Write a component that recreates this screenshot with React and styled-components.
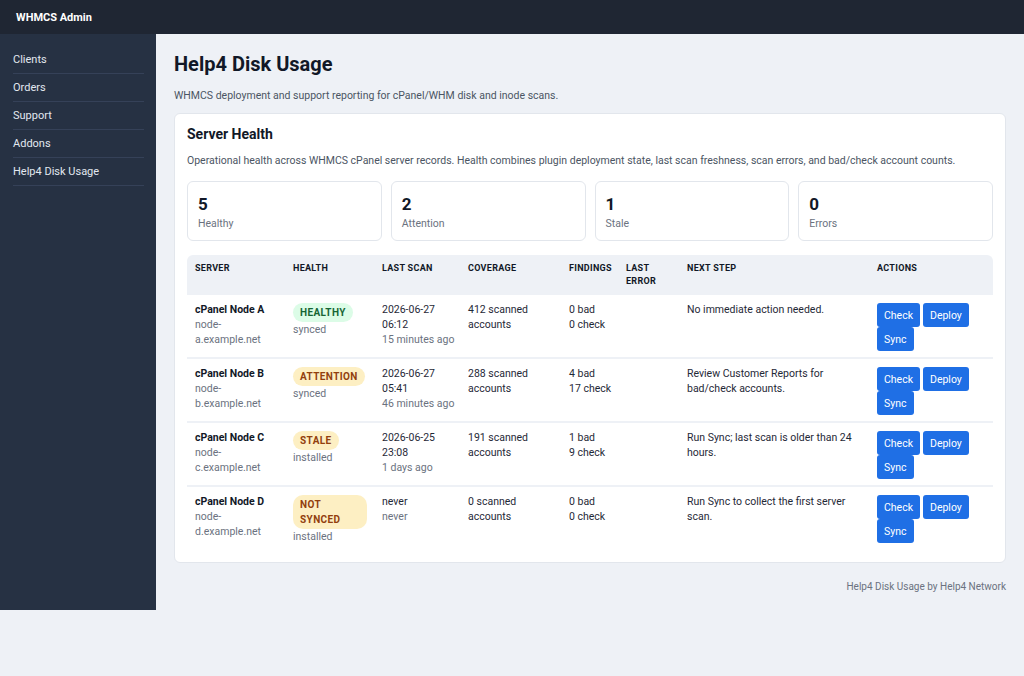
import React from 'react';
import styled, { createGlobalStyle } from 'styled-components';

const GlobalStyle = createGlobalStyle`
  html, body {
    margin: 0;
    padding: 0;
    background: #eef1f6;
    font-family: Roboto, "Noto Sans", "Liberation Sans", sans-serif;
    color: #111827;
  }
  * { box-sizing: border-box; }
`;

const TopBar = styled.header`
  height: 34px;
  background: #1f2633;
  color: #ffffff;
  display: flex;
  align-items: center;
  padding: 0 16px;
  font-size: 11px;
  font-weight: 700;
`;

const Layout = styled.div`
  display: flex;
  align-items: stretch;
`;

const Sidebar = styled.nav`
  width: 156px;
  flex-shrink: 0;
  background: #263143;
  padding: 12px 12px 0 13px;
`;

const NavItem = styled.div`
  height: 28px;
  display: flex;
  align-items: center;
  font-size: 11px;
  color: #e2e8f0;
  border-bottom: 1px solid #354158;
`;

const Main = styled.main`
  flex: 1;
  padding: 18px 18px 16px 18px;
`;

const PageTitle = styled.h1`
  margin: 0;
  font-size: 20px;
  line-height: 24px;
  font-weight: 700;
  color: #111827;
`;

const Subtitle = styled.p`
  margin: 12px 0 10px;
  font-size: 10.5px;
  line-height: 15px;
  color: #4b5563;
`;

const Card = styled.section`
  background: #ffffff;
  border: 1px solid #e2e6ec;
  border-radius: 6px;
  padding: 12px 12px 12px;
`;

const CardTitle = styled.h2`
  margin: 0;
  font-size: 14px;
  line-height: 17px;
  font-weight: 700;
  color: #111827;
`;

const CardText = styled.p`
  margin: 10px 0 13px;
  font-size: 10.5px;
  line-height: 15px;
  color: #4b5563;
`;

const StatsGrid = styled.div`
  display: grid;
  grid-template-columns: repeat(4, 1fr);
  gap: 9px;
  margin-bottom: 14px;
`;

const StatCard = styled.div`
  border: 1px solid #e2e6ec;
  border-radius: 6px;
  padding: 11px 10px 9px;
  height: 60px;
`;

const StatValue = styled.div`
  font-size: 17px;
  line-height: 22px;
  font-weight: 700;
  color: #111827;
`;

const StatLabel = styled.div`
  font-size: 10.5px;
  line-height: 18px;
  color: #6b7280;
`;

const Table = styled.table`
  width: 100%;
  border-collapse: separate;
  border-spacing: 0;
  table-layout: fixed;
  font-size: 10.5px;
  line-height: 15px;
`;

const Th = styled.th`
  background: #eef1f6;
  text-align: left;
  vertical-align: top;
  padding: 7px 4px 0 8px;
  height: 40px;
  font-size: 9px;
  line-height: 13px;
  font-weight: 700;
  letter-spacing: 0.3px;
  text-transform: uppercase;
  color: #111827;

  &:first-child { border-top-left-radius: 6px; }
  &:last-child { border-top-right-radius: 6px; }
`;

const Td = styled.td`
  vertical-align: top;
  padding: 7px 4px 6px 8px;
  color: #1f2937;
  border-bottom: ${({ $last }) => ($last ? 'none' : '2px solid #eef1f6')};
`;

const ServerName = styled.div`
  font-weight: 700;
  color: #111827;
`;

const Muted = styled.div`
  color: #6b7280;
  white-space: ${({ $nowrap }) => ($nowrap ? 'nowrap' : 'normal')};
`;

const badgeColors = {
  healthy: { bg: '#dcfce7', fg: '#166534' },
  attention: { bg: '#fdefc3', fg: '#92400e' },
  stale: { bg: '#fdefc3', fg: '#92400e' },
  notsynced: { bg: '#fdefc3', fg: '#92400e' },
};

const Badge = styled.span`
  display: inline-block;
  max-width: 74px;
  margin-top: 1px;
  padding: 2px 7px;
  border-radius: 10px;
  font-size: 10px;
  line-height: 15px;
  font-weight: 700;
  letter-spacing: 0.4px;
  background: ${({ $kind }) => badgeColors[$kind].bg};
  color: ${({ $kind }) => badgeColors[$kind].fg};
`;

const Actions = styled.div`
  display: flex;
  flex-wrap: wrap;
  column-gap: 3px;
  row-gap: 0;
  margin-top: 1px;
`;

const ActionButton = styled.button`
  height: 24px;
  padding: 0 7px;
  border: none;
  border-radius: 3px;
  background: #1f6fe5;
  color: #ffffff;
  font-family: inherit;
  font-size: 10.5px;
  cursor: pointer;
`;

const Footer = styled.div`
  margin-top: 17px;
  text-align: right;
  font-size: 10px;
  line-height: 14px;
  color: #6b7280;
`;

const servers = [
  {
    name: 'cPanel Node A', host: ['node-', 'a.example.net'], kind: 'healthy', label: 'HEALTHY',
    state: 'synced', scan: ['2026-06-27', '06:12'], ago: '15 minutes ago', coverage: 412,
    bad: 0, check: 0, next: 'No immediate action needed.',
  },
  {
    name: 'cPanel Node B', host: ['node-', 'b.example.net'], kind: 'attention', label: 'ATTENTION',
    state: 'synced', scan: ['2026-06-27', '05:41'], ago: '46 minutes ago', coverage: 288,
    bad: 4, check: 17, next: 'Review Customer Reports for bad/check accounts.',
  },
  {
    name: 'cPanel Node C', host: ['node-', 'c.example.net'], kind: 'stale', label: 'STALE',
    state: 'installed', scan: ['2026-06-25', '23:08'], ago: '1 days ago', coverage: 191,
    bad: 1, check: 9, next: 'Run Sync; last scan is older than 24 hours.',
  },
  {
    name: 'cPanel Node D', host: ['node-', 'd.example.net'], kind: 'notsynced', label: 'NOT SYNCED',
    state: 'installed', scan: ['never'], ago: 'never', coverage: 0,
    bad: 0, check: 0, next: 'Run Sync to collect the first server scan.',
  },
];

const stats = [
  { value: 5, label: 'Healthy' },
  { value: 2, label: 'Attention' },
  { value: 1, label: 'Stale' },
  { value: 0, label: 'Errors' },
];

const columns = [
  { label: 'Server', width: 98 },
  { label: 'Health', width: 89 },
  { label: 'Last Scan', width: 86 },
  { label: 'Coverage', width: 101 },
  { label: 'Findings', width: 57 },
  { label: 'Last Error', width: 61 },
  { label: 'Next Step', width: 190 },
  { label: 'Actions', width: 124 },
];

const App = () => {
  return (
    <>
      <GlobalStyle />
      <TopBar>WHMCS Admin</TopBar>
      <Layout>
        <Sidebar>
          {['Clients', 'Orders', 'Support', 'Addons', 'Help4 Disk Usage'].map((item) => (
            <NavItem key={item}>{item}</NavItem>
          ))}
        </Sidebar>
        <Main>
          <PageTitle>Help4 Disk Usage</PageTitle>
          <Subtitle>WHMCS deployment and support reporting for cPanel/WHM disk and inode scans.</Subtitle>

          <Card>
            <CardTitle>Server Health</CardTitle>
            <CardText>
              Operational health across WHMCS cPanel server records. Health combines plugin deployment state, last scan freshness, scan errors, and bad/check account counts.
            </CardText>

            <StatsGrid>
              {stats.map((s) => (
                <StatCard key={s.label}>
                  <StatValue>{s.value}</StatValue>
                  <StatLabel>{s.label}</StatLabel>
                </StatCard>
              ))}
            </StatsGrid>

            <Table>
              <colgroup>
                {columns.map((c) => (
                  <col key={c.label} style={{ width: c.width }} />
                ))}
              </colgroup>
              <thead>
                <tr>
                  {columns.map((c) => (
                    <Th key={c.label}>{c.label}</Th>
                  ))}
                </tr>
              </thead>
              <tbody>
                {servers.map((s, i) => {
                  const last = i === servers.length - 1;
                  return (
                    <tr key={s.name}>
                      <Td $last={last}>
                        <ServerName>{s.name}</ServerName>
                        <Muted>{s.host[0]}<br />{s.host[1]}</Muted>
                      </Td>
                      <Td $last={last}>
                        <Badge $kind={s.kind}>{s.label}</Badge>
                        <Muted>{s.state}</Muted>
                      </Td>
                      <Td $last={last}>
                        <div>{s.scan.map((p, j) => <div key={j}>{p}</div>)}</div>
                        <Muted $nowrap>{s.ago}</Muted>
                      </Td>
                      <Td $last={last}>{s.coverage} scanned<br />accounts</Td>
                      <Td $last={last}>
                        <div>{s.bad} bad</div>
                        <div>{s.check} check</div>
                      </Td>
                      <Td $last={last}></Td>
                      <Td $last={last}>{s.next}</Td>
                      <Td $last={last}>
                        <Actions>
                          <ActionButton>Check</ActionButton>
                          <ActionButton>Deploy</ActionButton>
                          <ActionButton>Sync</ActionButton>
                        </Actions>
                      </Td>
                    </tr>
                  );
                })}
              </tbody>
            </Table>
          </Card>

          <Footer>Help4 Disk Usage by Help4 Network</Footer>
        </Main>
      </Layout>
    </>
  );
};

export default App;
